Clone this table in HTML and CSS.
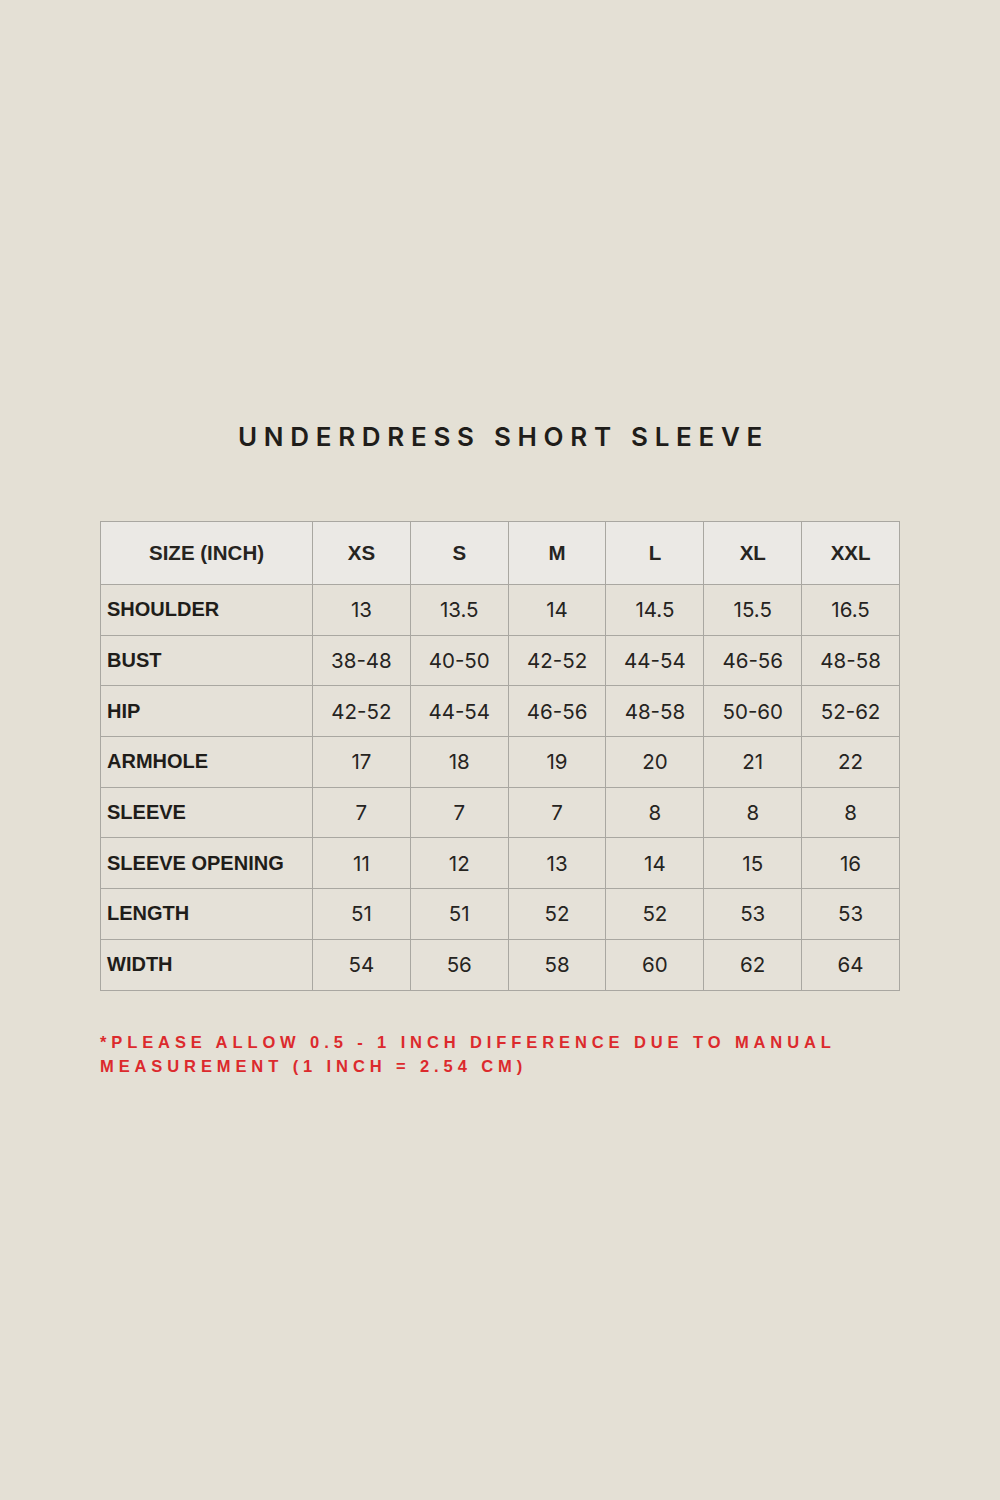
FILE: index.html
```html
<!DOCTYPE html>
<html>
<head>
<meta charset="utf-8">
<link rel="stylesheet" href="styles.css">
</head>
<body>
<div class="page">
  <h1 class="title">UNDERDRESS SHORT SLEEVE</h1>
  <table class="chart">
    <thead>
      <tr><th class="first">SIZE (INCH)</th><th>XS</th><th>S</th><th>M</th><th>L</th><th>XL</th><th>XXL</th></tr>
    </thead>
    <tbody>
      <tr><td class="label">SHOULDER</td><td>13</td><td>13.5</td><td>14</td><td>14.5</td><td>15.5</td><td>16.5</td></tr>
      <tr><td class="label">BUST</td><td>38-48</td><td>40-50</td><td>42-52</td><td>44-54</td><td>46-56</td><td>48-58</td></tr>
      <tr><td class="label">HIP</td><td>42-52</td><td>44-54</td><td>46-56</td><td>48-58</td><td>50-60</td><td>52-62</td></tr>
      <tr><td class="label">ARMHOLE</td><td>17</td><td>18</td><td>19</td><td>20</td><td>21</td><td>22</td></tr>
      <tr><td class="label">SLEEVE</td><td>7</td><td>7</td><td>7</td><td>8</td><td>8</td><td>8</td></tr>
      <tr><td class="label">SLEEVE OPENING</td><td>11</td><td>12</td><td>13</td><td>14</td><td>15</td><td>16</td></tr>
      <tr><td class="label">LENGTH</td><td>51</td><td>51</td><td>52</td><td>52</td><td>53</td><td>53</td></tr>
      <tr><td class="label">WIDTH</td><td>54</td><td>56</td><td>58</td><td>60</td><td>62</td><td>64</td></tr>
    </tbody>
  </table>
  <p class="note">*PLEASE ALLOW 0.5 - 1 INCH DIFFERENCE DUE TO MANUAL<br>MEASUREMENT (1 INCH = 2.54 CM)</p>
</div>
</body>
</html>
```
FILE: styles.css
```css
html, body {
  margin: 0;
  padding: 0;
  background: #e4e0d5;
}
.page {
  width: 1000px;
  height: 1500px;
  box-sizing: border-box;
  padding: 420px 100px 0 100px;
  background: #e4e0d5;
}
.title {
  margin: 0;
  text-align: center;
  font-family: Inter, "Liberation Sans", sans-serif;
  font-weight: 600;
  font-size: 26px;
  line-height: 34px;
  letter-spacing: 6.7px;
  color: #1f1d1a;
  padding-left: 7px;
}
.chart {
  margin-top: 67px;
  width: 800px;
  border-collapse: collapse;
  table-layout: fixed;
}
.chart th, .chart td {
  border: 1.5px solid #a9a7a1;
  text-align: center;
  color: #26241f;
  padding: 0;
}
.chart th {
  height: 62px;
  background: #ebe9e5;
  font-family: "Liberation Sans", Arial, sans-serif;
  font-weight: 700;
  font-size: 20.5px;
}
.chart th.first {
  width: 211px;
}
.chart td {
  height: 49.7px;
  background: #e5e1d8;
  font-family: Inter, "Liberation Sans", sans-serif;
  font-size: 20.5px;
  font-weight: 400;
}
.chart td.label {
  text-align: left;
  padding-left: 6px;
  font-family: "Liberation Sans", Arial, sans-serif;
  font-weight: 700;
  font-size: 20px;
  color: #1f1d1a;
}
.note {
  margin: 39px 0 0 0;
  font-family: "Liberation Sans", Arial, sans-serif;
  font-weight: 700;
  font-size: 16.5px;
  line-height: 24px;
  letter-spacing: 4.9px;
  color: #dc2a2d;
}
```
